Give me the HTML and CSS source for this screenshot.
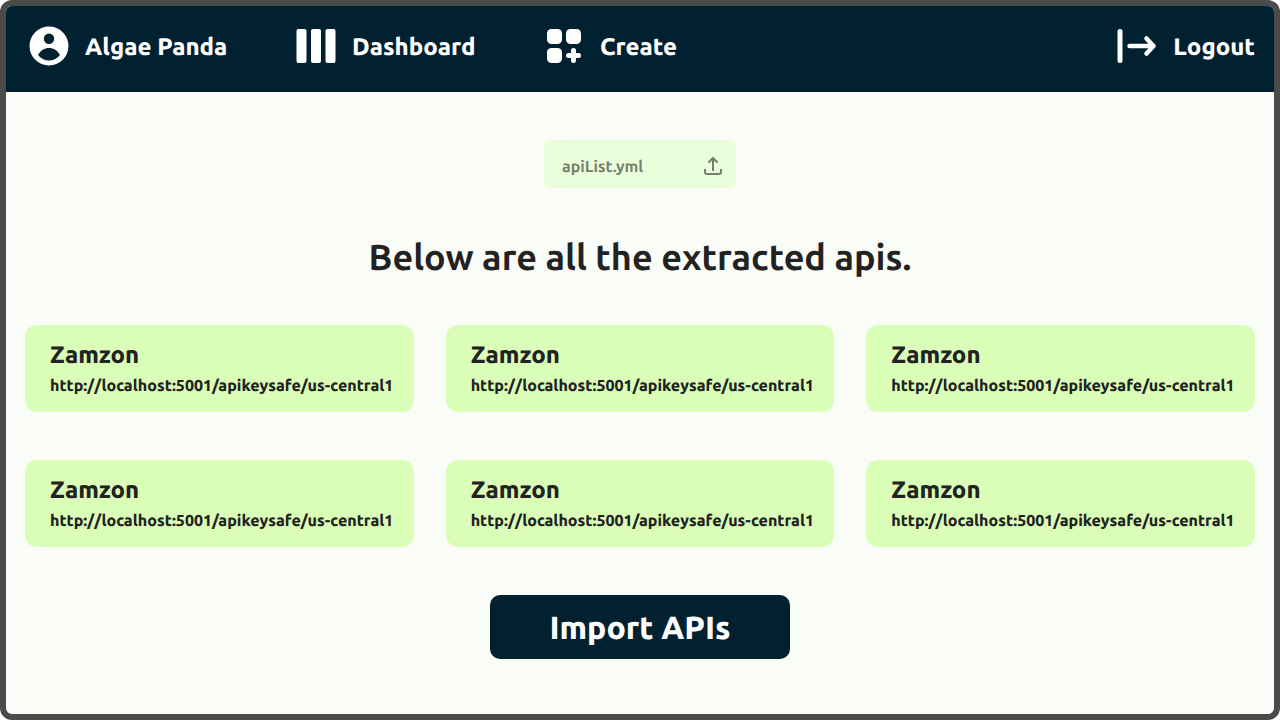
FILE: index.html
```html
<!DOCTYPE html>
<html lang="en">
<head>
  <meta charset="utf-8">
  <meta name="viewport" content="width=device-width, initial-scale=1">
  <title>Import APIs</title>
  <link rel="stylesheet" href="styles.css">
</head>
<body>
  <div class="window">
    <header class="topbar">
      <nav class="nav">
        <a class="nav-link nav-profile" href="#">
          <svg class="icon" viewBox="0 0 40 40" aria-hidden="true">
            <path fill="currentColor" fill-rule="evenodd" d="M20 .5a19.5 19.5 0 1 0 0 39a19.5 19.5 0 0 0 0-39zM20 7.500a5.200 5.200 0 1 1 0 10.400a5.200 5.200 0 0 1 0-10.400zM9 29C11.500 24.500 15.500 22 20 22s8.500 2.500 11 7C28.500 32.500 24.500 34.500 20 34.500S11.500 32.500 9 29z"/>
          </svg>
          <span class="nav-text">Algae Panda</span>
        </a>
        <a class="nav-link nav-dashboard" href="#">
          <svg class="icon" viewBox="0 0 40 40" fill="currentColor" aria-hidden="true">
            <rect x=".5" y="3" width="10" height="34" rx="2"/>
            <rect x="15" y="3" width="10" height="34" rx="2"/>
            <rect x="29.500" y="3" width="10" height="34" rx="2"/>
          </svg>
          <span class="nav-text">Dashboard</span>
        </a>
        <a class="nav-link" href="#">
          <svg class="icon" viewBox="0 0 40 40" aria-hidden="true">
            <g fill="currentColor">
              <rect x="3" y="3" width="15" height="15" rx="4.500"/>
              <rect x="22" y="3" width="15" height="15" rx="4.500"/>
              <rect x="3" y="22" width="15" height="15" rx="4.500"/>
            </g>
            <path d="M29.500 24.500v10M24.500 29.500h10" fill="none" stroke="currentColor" stroke-width="5" stroke-linecap="round"/>
          </svg>
          <span class="nav-text">Create</span>
        </a>
      </nav>
      <a class="nav-link" href="#">
        <svg class="icon" viewBox="0 0 40 40" fill="none" stroke="currentColor" stroke-linecap="round" stroke-linejoin="round" aria-hidden="true">
          <path stroke-width="5" d="M3 5.500v29"/>
          <path stroke-width="4.500" d="M12.500 20h24M29.500 12.500l7 7.500l-7 7.500"/>
        </svg>
        <span class="nav-text">Logout</span>
      </a>
    </header>

    <main class="content">
      <button class="file-button" type="button">
        <span class="file-name">apiList.yml</span>
        <svg class="upload-icon" viewBox="0 0 20 20" fill="none" stroke="currentColor" stroke-width="2" aria-hidden="true">
          <path d="M10 15V3M5.500 6.500L10 2l4.500 4.500M2 13v3q0 2 2 2h12q2 0 2-2v-3"/>
        </svg>
      </button>

      <h1 class="heading">Below are all the extracted apis.</h1>

      <ul class="api-grid">
        <li class="api-card"><h2 class="api-name">Zamzon</h2><p class="api-url">http://localhost:5001/apikeysafe/us-central1</p></li>
        <li class="api-card"><h2 class="api-name">Zamzon</h2><p class="api-url">http://localhost:5001/apikeysafe/us-central1</p></li>
        <li class="api-card"><h2 class="api-name">Zamzon</h2><p class="api-url">http://localhost:5001/apikeysafe/us-central1</p></li>
        <li class="api-card"><h2 class="api-name">Zamzon</h2><p class="api-url">http://localhost:5001/apikeysafe/us-central1</p></li>
        <li class="api-card"><h2 class="api-name">Zamzon</h2><p class="api-url">http://localhost:5001/apikeysafe/us-central1</p></li>
        <li class="api-card"><h2 class="api-name">Zamzon</h2><p class="api-url">http://localhost:5001/apikeysafe/us-central1</p></li>
      </ul>

      <button class="import-button" type="button">Import APIs</button>
    </main>
  </div>
</body>
</html>
```

FILE: styles.css
```css
* {
  box-sizing: border-box;
}

body {
  margin: 0;
  background: #fff;
  color: #222;
  font-family: Ubuntu, "Noto Sans", sans-serif;
  text-rendering: geometricPrecision;
}

h1, h2, p, ul {
  margin: 0;
  padding: 0;
}

button {
  border: 0;
  font-family: inherit;
  text-rendering: inherit;
  cursor: pointer;
}

.window {
  min-height: 100vh;
  border: 6px solid #4b4b4b;
  border-radius: 12px;
  background: #fafdf7;
  overflow: hidden;
}

.topbar {
  display: flex;
  align-items: center;
  justify-content: space-between;
  padding: 20px 19px 26px 23px;
  background: #022130;
  color: #fff;
}

.nav {
  display: flex;
}

.nav-link {
  display: flex;
  align-items: center;
  gap: 16px;
  color: inherit;
  font-size: 24px;
  font-weight: 800;
  line-height: 38px;
  text-decoration: none;
  white-space: nowrap;
}

.nav-text {
  padding-top: 2px;
}

.nav-profile {
  min-width: 267px;
}

.nav-dashboard {
  min-width: 248px;
}

.icon {
  flex: none;
  width: 40px;
  height: 40px;
}

.content {
  display: flex;
  flex-direction: column;
  align-items: center;
  padding: 48px 19px;
}

.file-button {
  display: flex;
  align-items: center;
  justify-content: space-between;
  width: 192px;
  height: 48px;
  padding: 4px 13px 0 18px;
  border-radius: 6px;
  background: #ebfedb;
  color: #747e6d;
  font-size: 16px;
  font-weight: 600;
}

.file-name {
  padding-top: 2px;
}

.upload-icon {
  width: 20px;
  height: 20px;
}

.heading {
  margin: 44px 0;
  font-size: 36px;
  font-weight: 600;
  line-height: 49px;
  text-align: center;
}

.api-grid {
  display: grid;
  grid-template-columns: repeat(3, minmax(0, 1fr));
  gap: 48px 32px;
  width: 100%;
  list-style: none;
}

.api-card {
  padding: 14px 12px 13px 25px;
  border-radius: 12px;
  background: #dafeb8;
}

.api-name {
  font-size: 24px;
  font-weight: 800;
  line-height: 32px;
}

.api-url {
  padding-top: 2px;
  font-size: 16px;
  font-weight: 800;
  line-height: 26px;
  overflow-wrap: anywhere;
}

.import-button {
  width: 300px;
  height: 64px;
  margin-top: 48px;
  padding-top: 3px;
  border-radius: 10px;
  background: #022130;
  color: #fff;
  font-size: 32px;
  font-weight: 800;
}
```
